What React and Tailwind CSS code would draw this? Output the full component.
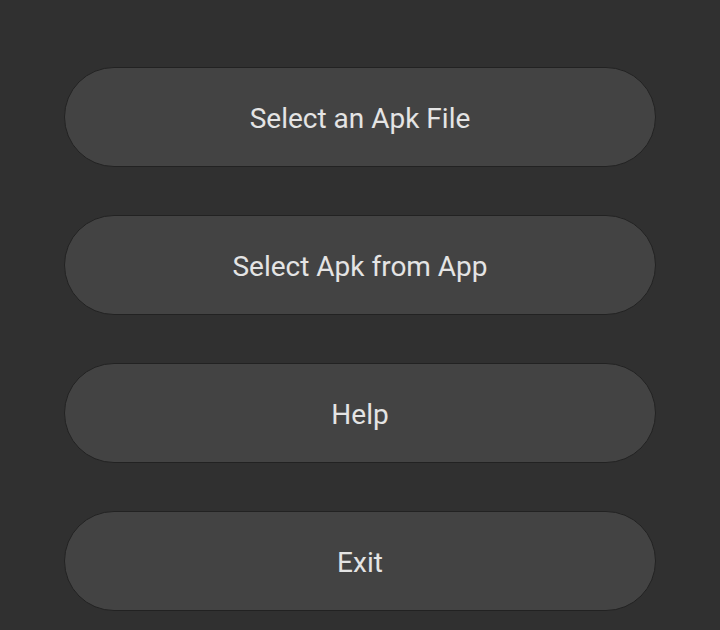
export default function App() {
  const items = ["Select an Apk File", "Select Apk from App", "Help", "Exit"];
  return (
    <div className="w-[720px] h-[630px] bg-[#303030] flex flex-col items-center pt-[67px] gap-[48px] overflow-hidden">
      {items.map((t) => (
        <button
          key={t}
          className="w-[592px] h-[100px] shrink-0 rounded-full bg-[#434343] border border-[#222222] text-[#e4e4e4] text-[28px] leading-none pt-[3px] font-['Roboto',sans-serif] flex items-center justify-center"
        >
          {t}
        </button>
      ))}
    </div>
  );
}
